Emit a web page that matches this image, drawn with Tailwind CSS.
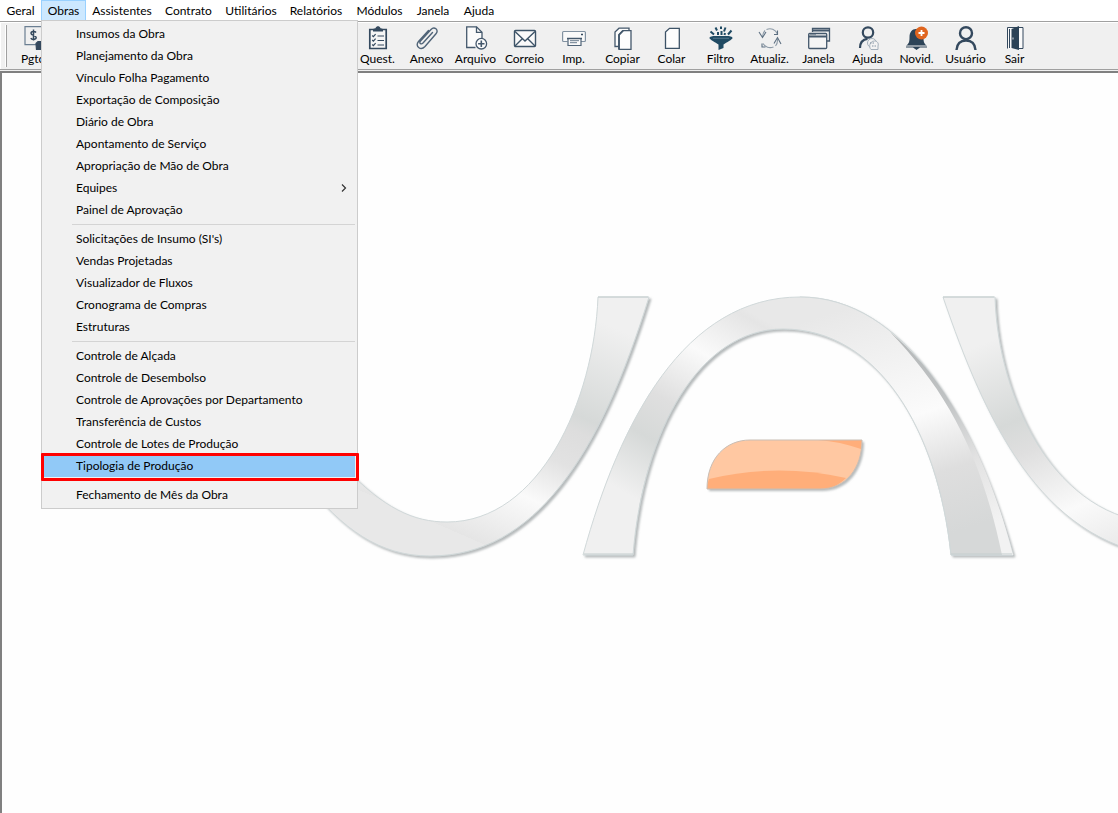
<!DOCTYPE html>
<html lang="pt-BR">
<head>
  <meta charset="UTF-8" />
  <meta name="viewport" content="width=device-width, initial-scale=1.0" />
  <title>Obras</title>

  <!-- Tailwind CSS -->
  <script src="https://cdn.jsdelivr.net/npm/@tailwindcss/browser@4"></script>
</head>
<body class="min-h-screen flex flex-col bg-[#f0f0f0] font-[Lato,sans-serif] text-[12px] leading-4 text-black overflow-hidden">

  <!-- Menu bar -->
  <nav class="relative z-10 bg-white">
    <ul class="flex h-[21px] items-stretch">
      <li><button class="h-full w-[41px] text-center">Geral</button></li>
      <li class="relative">
        <button class="h-full w-[45px] text-center bg-[#cce8ff] border border-[#99d1ff]">Obras</button>

        <!-- Obras menu -->
        <div class="absolute left-0 top-[20px] w-[317px] bg-[#f1f1f1] border border-[#ccc] py-[2px]">
          <ul>
            <li><button class="block w-full h-[22px] pl-[34px] text-left">Insumos da Obra</button></li>
            <li><button class="block w-full h-[22px] pl-[34px] text-left">Planejamento da Obra</button></li>
            <li><button class="block w-full h-[22px] pl-[34px] text-left">Vínculo Folha Pagamento</button></li>
            <li><button class="block w-full h-[22px] pl-[34px] text-left">Exportação de Composição</button></li>
            <li><button class="block w-full h-[22px] pl-[34px] text-left">Diário de Obra</button></li>
            <li><button class="block w-full h-[22px] pl-[34px] text-left">Apontamento de Serviço</button></li>
            <li><button class="block w-full h-[22px] pl-[34px] text-left">Apropriação de Mão de Obra</button></li>
            <li>
              <button class="flex w-full h-[22px] pl-[34px] pr-[9px] items-center justify-between text-left">
                Equipes
                <svg class="w-2 h-2" viewBox="0 0 8 8" fill="none" stroke="#333" stroke-width="1.2"><path d="M2 0.5 5.5 4 2 7.5" /></svg>
              </button>
            </li>
            <li><button class="block w-full h-[22px] pl-[34px] text-left">Painel de Aprovação</button></li>
          </ul>
          <hr class="my-[3px] ml-[30px] mr-[2px] border-[#d4d4d4]" />
          <ul>
            <li><button class="block w-full h-[22px] pl-[34px] text-left">Solicitações de Insumo (SI's)</button></li>
            <li><button class="block w-full h-[22px] pl-[34px] text-left">Vendas Projetadas</button></li>
            <li><button class="block w-full h-[22px] pl-[34px] text-left">Visualizador de Fluxos</button></li>
            <li><button class="block w-full h-[22px] pl-[34px] text-left">Cronograma de Compras</button></li>
            <li><button class="block w-full h-[22px] pl-[34px] text-left">Estruturas</button></li>
          </ul>
          <hr class="my-[3px] ml-[30px] mr-[2px] border-[#d4d4d4]" />
          <ul>
            <li><button class="block w-full h-[22px] pl-[34px] text-left">Controle de Alçada</button></li>
            <li><button class="block w-full h-[22px] pl-[34px] text-left">Controle de Desembolso</button></li>
            <li><button class="block w-full h-[22px] pl-[34px] text-left">Controle de Aprovações por Departamento</button></li>
            <li><button class="block w-full h-[22px] pl-[34px] text-left">Transferência de Custos</button></li>
            <li><button class="block w-full h-[22px] pl-[34px] text-left">Controle de Lotes de Produção</button></li>
            <li class="relative px-[2px]">
              <button class="block w-full h-[22px] pl-[32px] text-left bg-[#91c9f7]">Tipologia de Produção</button>
              <!-- highlight frame -->
              <span class="absolute -left-px -right-[2px] -top-[2px] -bottom-1 border-3 border-[#f00] rounded-[1px]"></span>
            </li>
          </ul>
          <hr class="my-[3px] ml-[30px] mr-[2px] border-transparent" />
          <ul>
            <li><button class="block w-full h-[22px] pl-[34px] text-left">Fechamento de Mês da Obra</button></li>
          </ul>
        </div>
      </li>
      <li><button class="h-full w-[72px] text-center">Assistentes</button></li>
      <li><button class="h-full w-[61px] text-center">Contrato</button></li>
      <li><button class="h-full w-[64px] text-center">Utilitários</button></li>
      <li><button class="h-full w-[66px] text-center">Relatórios</button></li>
      <li><button class="h-full w-[61px] text-center">Módulos</button></li>
      <li><button class="h-full w-[46px] text-center">Janela</button></li>
      <li><button class="h-full w-[46px] text-center">Ajuda</button></li>
    </ul>
  </nav>

  <!-- Toolbar -->
  <div class="border-y border-[#a0a0a0]">
    <div class="flex h-[47px] border-t border-l border-white">
      <div class="ml-[4px] mt-[2px] h-[42px] w-[2px] border-r border-[#a0a0a0] bg-white"></div>
      <button class="ml-[3px] mt-[3px] w-[49px] shrink-0 flex flex-col items-center gap-px">
        <svg class="w-6 h-6" viewBox="0 0 24 24" fill="none" stroke="#6b7f92" stroke-width="1.2">
          <path d="M2 .7h20v18H2z" />
          <path d="M13 6.500c-1-1.500-5-1.500-5 .8 0 2.700 5.200 1.400 5.200 4.200 0 2.200-4.200 2.600-5.400.7M10.500 3.500v11" stroke="#34495e" stroke-width="1.500" />
          <path d="M13 17.500l2-2h7v8h-8.500z" fill="#34495e" stroke="#34495e" />
        </svg>
        <span>Pgto.</span>
      </button>
      <button class="ml-[294px] mt-[3px] w-[49px] shrink-0 flex flex-col items-center gap-px">
        <svg class="w-6 h-6" viewBox="0 0 24 24" fill="none" stroke="#34495e">
          <path d="M3.800 3.500h16.400v19H3.800z" fill="#f5f5f5" stroke-width="1.700" />
          <path d="M7 5.500V3l2.500-.7C10.500-.3 13.500-.3 14.500 2.300L17 3v2.500z" fill="#34495e" stroke="none" />
          <path d="m6.200 9.500 1.200 1.200 2.200-2.500M6.200 14l1.200 1.200 2.200-2.500M6.200 18.500l1.200 1.200 2.200-2.500M11.500 10H18M11.500 14.500H18M11.500 19H18" stroke-width="1.200" />
        </svg>
        <span>Quest.</span>
      </button>
      <button class="mt-[3px] w-[49px] shrink-0 flex flex-col items-center gap-px">
        <svg class="w-6 h-6" viewBox="0 0 24 24" fill="none" stroke="#506478" stroke-width="1.400" stroke-linecap="round">
          <path d="M17.500 6.500 8 17c-2 2-4.300 0-2.500-2L16 3.500c3.300-3.600 8.300.4 5 4.200L10 20.500c-4.300 4.700-10.500-.3-6.500-5L13.500 4.500" />
        </svg>
        <span>Anexo</span>
      </button>
      <button class="mt-[3px] w-[49px] shrink-0 flex flex-col items-center gap-px">
        <svg class="w-6 h-6" viewBox="0 0 24 24" fill="none" stroke="#44586c" stroke-width="1.300">
          <path d="M11.500 21.500H2.700V.8h9.800l5.500 5.500v6" fill="#fbfbfb" />
          <path d="M12.500.8v5.500H18" />
          <circle cx="17.300" cy="17.700" r="5.300" fill="#fbfbfb" />
          <path d="M17.300 14.500v6.400M14.100 17.700h6.400" stroke-width="1.600" />
        </svg>
        <span>Arquivo</span>
      </button>
      <button class="mt-[3px] w-[49px] shrink-0 flex flex-col items-center gap-px">
        <svg class="w-6 h-6" viewBox="0 0 24 24" fill="none" stroke="#3d5367" stroke-width="1.400">
          <rect x="1.500" y="4.500" width="21" height="16" rx="1" fill="#fafafa" />
          <path d="M2 5.500 12 15 22 5.500M2 20l7.500-7.500M22 20l-7.500-7.500" />
        </svg>
        <span>Correio</span>
      </button>
      <button class="mt-[3px] w-[49px] shrink-0 flex flex-col items-center gap-px">
        <svg class="w-6 h-6" viewBox="0 0 24 24" fill="none" stroke="#8292a1" stroke-width="1.200">
          <path d="M5.500 15.500H1.500c-.5 0-.9-.4-.9-1v-8c0-.6.400-1 .9-1h21c.5 0 .9.400.9 1v8c0 .6-.4 1-.9 1H19" fill="#fafafa" />
          <path d="M6 12.500h13v7H6z" fill="#fafafa" stroke="#506478" />
          <path d="M5 12.500h15" stroke="#44586c" stroke-width="1.500" />
          <path d="M8 14.700h9M8 16.700h7" stroke="#6b7d8e" stroke-width="1" />
          <path d="M19 8.500h2" stroke="#34495e" stroke-width="1.500" />
        </svg>
        <span>Imp.</span>
      </button>
      <button class="mt-[3px] w-[49px] shrink-0 flex flex-col items-center gap-px">
        <svg class="w-6 h-6" viewBox="0 0 24 24" fill="#fdfdfd" stroke="#44586c" stroke-width="1.300">
          <path d="M4 20.500V6l4-3.800h10v18z" />
          <path d="M8 23.300V8.500l4-3.800h8v18.600z" />
          <path d="M8 23.300V9l4-4.300" stroke-width="1.800" fill="none" />
        </svg>
        <span>Copiar</span>
      </button>
      <button class="mt-[3px] w-[49px] shrink-0 flex flex-col items-center gap-px">
        <svg class="w-6 h-6" viewBox="0 0 24 24" fill="#fdfdfd" stroke="#3d5367" stroke-width="1.300">
          <path d="M5.500 22.300V6l4-3.700h9.800v20z" />
        </svg>
        <span>Colar</span>
      </button>
      <button class="mt-[3px] w-[49px] shrink-0 flex flex-col items-center gap-px">
        <svg class="w-6 h-6" viewBox="0 0 24 24" fill="#1f4a63">
          <path d="M.5 12c0-1.500 3-2 6-2h11c3 0 6 .5 6 2 0 1.500-6 4.500-9 6.500V22l-5 2v-5.500C6.500 16.500.5 13.500.5 12z" />
          <path d="M4 12.300h16" fill="none" stroke="#5f7f91" stroke-width=".8" />
          <path d="m1.500 5.500 3.500 3M6.500 1.500l1.500 3M9 6v3M12 .5v2.500M12.500 5v4M16.500 1.500l-1.500 4M16 7l-.5 2M22.500 4.500l-3.500 4" stroke="#1f4a63" stroke-width="2" />
        </svg>
        <span>Filtro</span>
      </button>
      <button class="mt-[3px] w-[49px] shrink-0 flex flex-col items-center gap-px">
        <svg class="w-6 h-6" viewBox="0 0 24 24" fill="none" stroke="#8c9aa7" stroke-width="1.100">
          <path d="M8.500 3.500c4-1.700 9-.5 11 4.500M15.500 21c-4 1.500-8.500.3-10.500-3.500" />
          <path d="M7 4.500C5.500 6 4.800 8 4.500 11M17.500 20c1.500-1.700 2.200-4 2-7" />
          <path d="m1 6 3.500 5.500L8 6M16 17.500l3.500-6L23 18M4 17.500v3.500h3.500M19.500 4.500V8.500H16" stroke="#5c6f81" />
        </svg>
        <span>Atualiz.</span>
      </button>
      <button class="mt-[3px] w-[49px] shrink-0 flex flex-col items-center gap-px">
        <svg class="w-6 h-6" viewBox="0 0 24 24" fill="none" stroke="#44586c" stroke-width="1.300">
          <path d="M5.500 6V2.500h17V15H20" />
          <path d="M5.500 4.500h17" stroke-width="2" />
          <rect x="1.700" y="7.500" width="18" height="15" rx="1" fill="#f5f5f5" />
          <path d="M1.700 10.500h18" stroke-width="2" />
          <path d="M3.500 8.700h5" stroke-dasharray="1 1" />
        </svg>
        <span>Janela</span>
      </button>
      <button class="mt-[3px] w-[49px] shrink-0 flex flex-col items-center gap-px">
        <svg class="w-6 h-6" viewBox="0 0 24 24" fill="none" stroke="#34495e" stroke-width="2.200">
          <circle cx="12" cy="6.500" r="5.200" />
          <path d="M4 22c0-5.500 3-8.700 7.500-9.200" />
          <circle cx="16" cy="17" r="4.500" fill="#f3f3f3" stroke="#a3afba" stroke-width="1" />
          <path d="M15 23.500h7V20c1-3-1-5-3.500-5-5 0-6 6-3.500 8.500z" fill="#f3f3f3" stroke="#a3afba" stroke-width="1" />
          <path d="M14 17h4M16 20h4" stroke="#8292a1" stroke-width="1" stroke-dasharray="1 .5" />
        </svg>
        <span>Ajuda</span>
      </button>
      <button class="mt-[3px] w-[49px] shrink-0 flex flex-col items-center gap-px">
        <svg class="w-6 h-6" viewBox="0 0 24 24" fill="#2c4357">
          <path d="M1 19.500c3-1.500 3.500-4 3.500-8C4.500 6 7 3 11 3s7.500 3 7.500 8.500c0 4 .5 6.500 3.500 8zM1 20.500h21v1H1zM8 21.500h7L11.500 24z" />
          <circle cx="16.500" cy="7" r="6.500" fill="#e0651f" />
          <path d="M16.500 4v6M13.500 7h6" stroke="#fff" stroke-width="1.800" />
        </svg>
        <span>Novid.</span>
      </button>
      <button class="mt-[3px] w-[49px] shrink-0 flex flex-col items-center gap-px">
        <svg class="w-6 h-6" viewBox="0 0 24 24" fill="none" stroke="#34495e" stroke-width="2.400">
          <circle cx="12" cy="7.200" r="6" />
          <path d="M2.500 24c.5-6.500 4-9.500 9.500-9.500s9 3 9.500 9.500" />
        </svg>
        <span>Usuário</span>
      </button>
      <button class="mt-[3px] w-[49px] shrink-0 flex flex-col items-center gap-px">
        <svg class="w-6 h-6" viewBox="0 0 24 24">
          <path d="M4.500 22.500V1.500h15.500v21h-4" fill="#fafafa" stroke="#34495e" stroke-width="1" />
          <path d="M6.500 3v19" stroke="#34495e" stroke-width="1" />
          <path d="M8.500 3 16 0v24l-7.500-2z" fill="#2c4357" />
          <path d="M10 11.500v2" stroke="#dde3e8" stroke-width="1" />
        </svg>
        <span>Sair</span>
      </button>
    </div>
  </div>

  <!-- Workspace -->
  <main class="mt-px relative flex-1 border-t-2 border-l-2 border-[#808080] bg-[#fefefe]">
    <svg class="absolute inset-0 w-full h-full" viewBox="2 73 1116 740" preserveAspectRatio="xMidYMid slice" role="img" aria-label="Logo">
      <defs>
        <linearGradient id="steelLeft" gradientUnits="userSpaceOnUse" x1="620" y1="330" x2="520" y2="560">
          <stop offset="0" stop-color="#f0f0f0" />
          <stop offset=".38" stop-color="#d6d9d8" />
          <stop offset=".44" stop-color="#dddddd" />
          <stop offset=".58" stop-color="#e2e2e2" />
          <stop offset=".76" stop-color="#fafafa" />
          <stop offset="1" stop-color="#e5e5e5" />
          <stop offset="1" stop-color="#e8e8e8" />
        </linearGradient>
        <linearGradient id="steelRight" gradientUnits="userSpaceOnUse" x1="980" y1="345" x2="1070" y2="560">
          <stop offset="0" stop-color="#f0f0f0" />
          <stop offset=".36" stop-color="#d6d9d8" />
          <stop offset=".5" stop-color="#dfdfdf" />
          <stop offset=".8" stop-color="#fafafa" />
          <stop offset="1" stop-color="#ececec" />
        </linearGradient>
        <linearGradient id="archLeft" gradientUnits="userSpaceOnUse" x1="620" y1="490" x2="730" y2="300">
          <stop offset="0" stop-color="#f0f0f0" />
          <stop offset=".27" stop-color="#d6d9d8" />
          <stop offset=".46" stop-color="#dfdfdf" />
          <stop offset=".73" stop-color="#fafafa" />
          <stop offset=".97" stop-color="#e5e5e5" />
          <stop offset="1" stop-color="#e8e8e8" />
        </linearGradient>
        <linearGradient id="archRight" gradientUnits="userSpaceOnUse" x1="840" y1="310" x2="915" y2="545">
          <stop offset="0" stop-color="#e8e8e8" />
          <stop offset=".5" stop-color="#fbfbfb" />
          <stop offset=".75" stop-color="#dedede" />
          <stop offset="1" stop-color="#d6d8d8" />
        </linearGradient>
        <linearGradient id="archEdge" gradientUnits="userSpaceOnUse" x1="890" y1="330" x2="1000" y2="520">
          <stop offset="0" stop-color="#b4b7b8" />
          <stop offset=".4" stop-color="#bfc2c3" />
          <stop offset=".7" stop-color="#e2e2e2" />
          <stop offset="1" stop-color="#f2f2f2" />
        </linearGradient>
        <clipPath id="archSide"><path d="M800 280h230v280H800z" /></clipPath>
        <filter id="shadow" x="-5%" y="-5%" width="110%" height="115%">
          <feDropShadow dx="2" dy="2" stdDeviation="1" flood-color="#7c8385" flood-opacity=".55" />
        </filter>
      </defs>

      <g filter="url(#shadow)" stroke="#d0d8d9" stroke-width="1">
        <path d="M598 297C594 400 540 522 447 522C413 522 384 508 345 468L303 480C343 530 380 556 430 556C535 556 600 455 649 297Z" fill="url(#steelLeft)" />
        <path d="M943 297C985 420 1040 540 1160 556V523C1056 520 998 400 995 297Z" fill="url(#steelRight)" />
        <path d="M583 555C620 420 685 297 800 297C905 297 975 420 1013 555H951C938 430 878 329 783 329C700 329 643 430 633 555Z" fill="url(#archLeft)" />
      </g>
      <g clip-path="url(#archSide)">
        <path d="M583 555C620 420 685 297 800 297C905 297 975 420 1013 555H951C938 430 878 329 783 329C700 329 643 430 633 555Z" fill="url(#archRight)" stroke="#d0d8d9" />
        <path d="M890 332C942 374 986 450 1013 555H1002C980 450 945 389 890 332Z" fill="url(#archEdge)" />
      </g>
      <path d="M598 297H648M943 297H994M584 554H633M951 554H1012" stroke="#c5cecf" stroke-width="1" />

      <!-- orange bar -->
      <path d="M707 489C707 458 726 440 750 440H862C862 468 846 489 820 489Z" fill="#ffc8a2" filter="url(#shadow)" />
      <path d="M707 489C707 485 708 482 709 479C755 468 800 468 846 478C838 486 830 489 820 489Z" fill="#ffae7a" />
      <path d="M818 440H862L861 449C847 444 833 441 818 440Z" fill="#ffae7a" />
      <path d="M707 489C707 458 726 440 750 440H862C862 468 846 489 820 489Z" fill="none" stroke="#c9beb5" stroke-width="1" />
    </svg>
  </main>
</body>
</html>
